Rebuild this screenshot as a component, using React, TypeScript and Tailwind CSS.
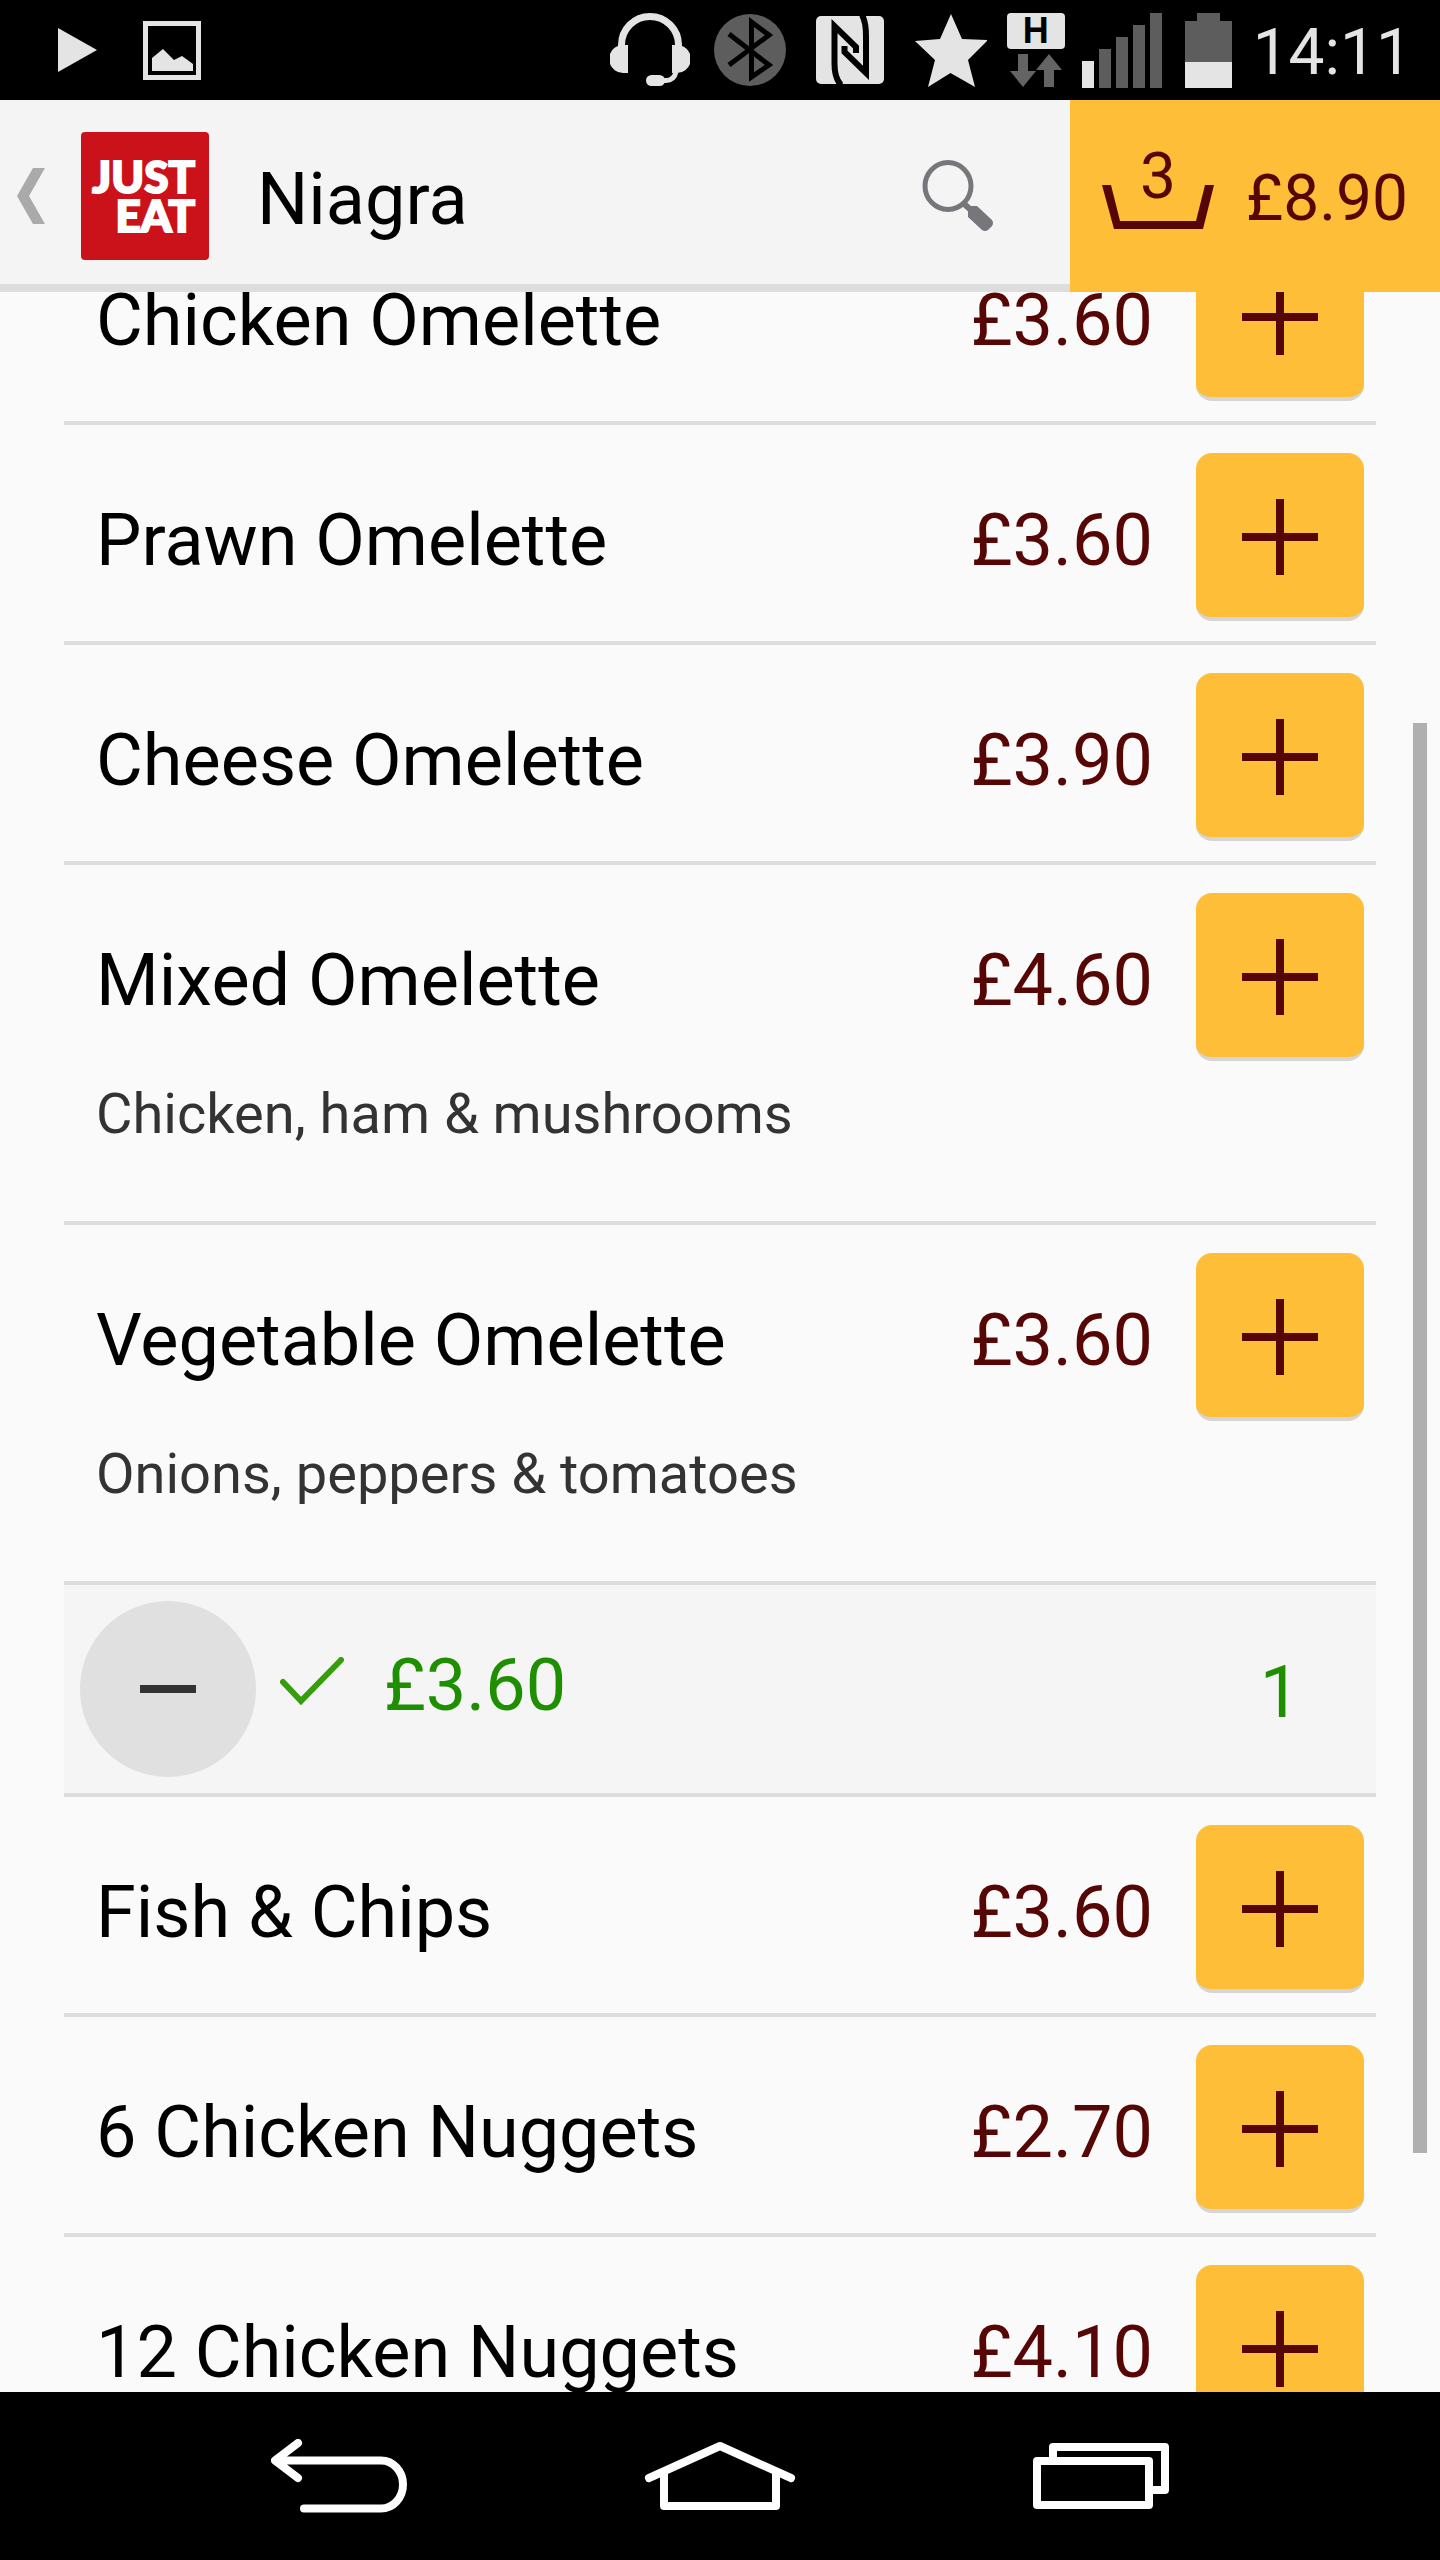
type MenuItem = {
  name: string;
  price: string;
  description?: string;
  quantity?: number;
};

const items: MenuItem[] = [
  { name: "Chicken Omelette", price: "£3.60" },
  { name: "Prawn Omelette", price: "£3.60" },
  { name: "Cheese Omelette", price: "£3.90" },
  {
    name: "Mixed Omelette",
    price: "£4.60",
    description: "Chicken, ham & mushrooms",
  },
  {
    name: "Vegetable Omelette",
    price: "£3.60",
    description: "Onions, peppers & tomatoes",
    quantity: 1,
  },
  { name: "Fish & Chips", price: "£3.60" },
  { name: "6 Chicken Nuggets", price: "£2.70" },
  { name: "12 Chicken Nuggets", price: "£4.10" },
];

function StatusBar() {
  return (
    <div className="flex h-[100px] shrink-0 items-center justify-between bg-black pl-[58px] pr-7 text-[#e4e4e4]">
      <div className="flex items-center gap-[46px]">
        <svg width="39" height="44" viewBox="0 0 39 44" fill="currentColor">
          <path d="M0 0 39 22 0 44Z" />
        </svg>
        <svg width="58" height="59" viewBox="0 0 58 59" fill="currentColor">
          <path d="M0 0H58V59H0ZM5 5V54H53V5Z" fillRule="evenodd" />
          <path d="M9 37 20 28 31 39 39 35 50 43V50H9Z" />
        </svg>
      </div>

      <div className="flex items-center">
        {/* headset */}
        <svg className="mr-6" width="80" height="74" viewBox="0 0 80 74" fill="none">
          <path d="M11.500 34V32A28.500 28.500 0 0 1 68.500 32V34" stroke="currentColor" strokeWidth="7" />
          <path d="M8 32H18V60H14A14 14 0 0 1 8 33ZM72 32H62V60H66A14 14 0 0 0 72 33Z" fill="currentColor" />
          <path d="M66 59Q64 67.500 56 67.500H52" stroke="currentColor" strokeWidth="5" />
          <rect x="36" y="62" width="19" height="11" rx="5.500" fill="currentColor" />
        </svg>
        {/* bluetooth */}
        <svg className="mr-[30px]" width="72" height="74" viewBox="0 0 72 74" fill="none">
          <circle cx="36" cy="37" r="36" fill="#5d5d5d" />
          <path d="M15 21 55 52 37.500 64V9L55 22 15 52" stroke="#000" strokeWidth="5" />
        </svg>
        {/* nfc */}
        <svg className="mr-[31px]" width="68" height="68" viewBox="0 0 68 68" fill="none">
          <rect width="68" height="68" rx="5" fill="currentColor" />
          <path d="M25 69Q18.500 62 18.500 48V10L40 31V37" stroke="#000" strokeWidth="6" />
          <path d="M46 -1Q50 6 50 20V57L28.500 36V30" stroke="#000" strokeWidth="6" />
        </svg>
        {/* star */}
        <svg className="mr-5" width="72" height="73" viewBox="0 0 72 73" fill="currentColor">
          <path d="M36 0 47 25 73 26 53 46 60 73 35.500 59 13 73 20 46 0 27 25 25Z" />
        </svg>
        {/* mobile data */}
        <div className="mr-[17px] flex w-[58px] flex-col items-center gap-[5px]">
          <span className="h-9 w-full rounded bg-[#e4e4e4] text-center font-['Liberation_Sans'] text-[36px] font-bold leading-9 text-black">
            H
          </span>
          <svg width="52" height="33" viewBox="0 0 52 33" fill="#646464">
            <path d="M8 0H18V17H26L13 33 0 17H8ZM39 0 52 16H44V33H34V16H26Z" />
          </svg>
        </div>
        {/* signal */}
        <svg className="mr-[23px]" width="80" height="75" viewBox="0 0 80 75">
          <path d="M17 36H29V75H17ZM34 24H46V75H34ZM51 12H63V75H51ZM68 0H80V75H68Z" fill="#5d5d5d" />
          <path d="M0 48H12V75H0Z" fill="currentColor" />
        </svg>
        {/* battery */}
        <svg className="mr-[21px]" width="47" height="75" viewBox="0 0 47 75">
          <path d="M0 8H12V0H35V8H47V50H0Z" fill="#5d5d5d" />
          <path d="M0 49H47V75H0Z" fill="currentColor" />
        </svg>
        <time className="pt-1.5 text-[64px] leading-none">14:11</time>
      </div>
    </div>
  );
}

function Header() {
  return (
    <header className="flex h-[192px] shrink-0 bg-[#f4f4f4]">
      <div className="flex flex-1 items-center border-b-8 border-[#dddddd] pl-[17px] pt-2">
        <button aria-label="Back" className="mr-9 text-[#aaaaaa]">
          <svg width="28" height="56" viewBox="0 0 28 56" fill="currentColor">
            <path d="M16 0H28L12 28 28 56H16L0 28Z" />
          </svg>
        </button>
        <div className="flex h-32 w-32 items-center justify-end rounded bg-[#cb121b] pr-3.5 text-right font-['Lato'] text-[44px] font-black leading-[39px] text-white [-webkit-text-stroke:2px_white]">
          <p>
            JUST
            <br />
            EAT
          </p>
        </div>
        <h1 className="ml-12 flex-1 pt-2 text-[72px] leading-[84px] text-black">Niagra</h1>
        <button aria-label="Search" className="mr-[76px] text-[#77777b]">
          <svg width="72" height="72" viewBox="0 0 72 72" fill="none">
            <ellipse cx="26" cy="26" rx="23" ry="23.500" stroke="currentColor" strokeWidth="5" />
            <path d="M40 42 50 51" stroke="currentColor" strokeWidth="6" />
            <path d="M46 48 49 46H55L70 60Q72 63 70 66L66 70Q63 72 60 70L46 57Z" fill="currentColor" />
          </svg>
        </button>
      </div>
      <button
        aria-label="Basket, 3 items, £8.90"
        className="flex w-[370px] items-center justify-between bg-[#ffbe37] px-8 text-[64px] leading-[76px] text-[#570606]"
      >
        <span className="relative flex h-[114px] w-[112px] justify-center">
          <span>3</span>
          <svg className="absolute bottom-6 left-0" width="112" height="44" viewBox="0 0 112 44" fill="currentColor">
            <path d="M0 0H9L18 36H94L103 0H112L101 44H12Z" />
          </svg>
        </span>
        <span className="pt-1.5">£8.90</span>
      </button>
    </header>
  );
}

function OrderedRow({ price, quantity }: { price: string; quantity: number }) {
  return (
    <div className="flex h-[212px] items-start border-b-4 border-[#dddddd] bg-[#f5f5f5] pl-4 pr-3 text-[72px] text-[#1e8f00]">
      <button
        aria-label="Remove one"
        className="mt-4 flex h-44 w-44 items-center justify-center rounded-full bg-[#e0e0e0]"
      >
        <span className="h-2 w-14 bg-[#333333]" />
      </button>
      <svg className="ml-6 mt-[72px]" width="64" height="50" viewBox="0 0 64 50" fill="none">
        <path d="M3 25 21 44 61 3" stroke="#369e0a" strokeWidth="6" strokeLinecap="round" />
      </svg>
      <span className="ml-10 flex-1 leading-[202px]">{price}</span>
      <span className="w-[168px] text-center leading-[216px]">{quantity}</span>
    </div>
  );
}

function MenuRow({ item }: { item: MenuItem }) {
  return (
    <li>
      <div className="border-b-4 border-[#dddddd] pb-3 pl-8 pr-3 pt-7">
        <div className="flex items-start text-[72px] leading-[176px]">
          <h2 className="flex-1 text-black">{item.name}</h2>
          <span className="mr-[43px] text-[#570606]">{item.price}</span>
          <button
            aria-label={`Add ${item.name}`}
            className="flex h-[168px] w-[168px] items-center justify-center rounded-2xl border-b-4 border-[#d5d5d5] bg-[#ffbe37] pt-1 text-[#570606]"
          >
            <svg width="76" height="76" viewBox="0 0 76 76" fill="currentColor">
              <path d="M34 0H42V34H76V42H42V76H34V42H0V34H34Z" />
            </svg>
          </button>
        </div>
        {item.description && (
          <p className="mb-[62px] mt-3 text-[56px] leading-[66px] text-[#333333]">
            {item.description}
          </p>
        )}
      </div>
      {item.quantity && <OrderedRow price={item.price} quantity={item.quantity} />}
    </li>
  );
}

function NavBar() {
  return (
    <nav className="grid h-[168px] shrink-0 grid-cols-3 bg-black px-[149px] text-white">
      <button aria-label="Back" className="flex items-center justify-center">
        <svg width="136" height="74" viewBox="0 0 136 74" fill="none" stroke="currentColor" strokeWidth="8" strokeLinecap="round" strokeLinejoin="round">
          <path d="M27 4 4 21.500 27 39M5 21.500H110A22 24 0 0 1 110 69.500H33" />
        </svg>
      </button>
      <button aria-label="Home" className="flex items-center justify-center">
        <svg width="152" height="70" viewBox="0 0 152 70" fill="none" stroke="currentColor" strokeWidth="8" strokeLinecap="round" strokeLinejoin="round">
          <path d="M5 37 76 5 147 37M20 32V65H132V32" />
        </svg>
      </button>
      <button aria-label="Recent apps" className="flex items-center justify-center">
        <svg width="136" height="66" viewBox="0 0 136 66" fill="none" stroke="currentColor" strokeWidth="8" strokeLinejoin="round">
          <path d="M4 18H116V62H4ZM20 18V4H132V47H118" />
        </svg>
      </button>
    </nav>
  );
}

export default function App() {
  return (
    <div className="flex h-screen flex-col overflow-hidden bg-[#fafafa] font-['Roboto',sans-serif]">
      <StatusBar />
      <Header />
      <main className="relative min-h-0 flex-1 overflow-hidden">
        {/* list is scrolled part of the way through the first row */}
        <ul className="-mt-[87px] px-16">
          {items.map((item) => (
            <MenuRow key={item.name} item={item} />
          ))}
        </ul>
        <div className="absolute right-[13px] top-[431px] h-[1430px] w-3.5 bg-[#b0b0b0]" />
      </main>
      <NavBar />
    </div>
  );
}
